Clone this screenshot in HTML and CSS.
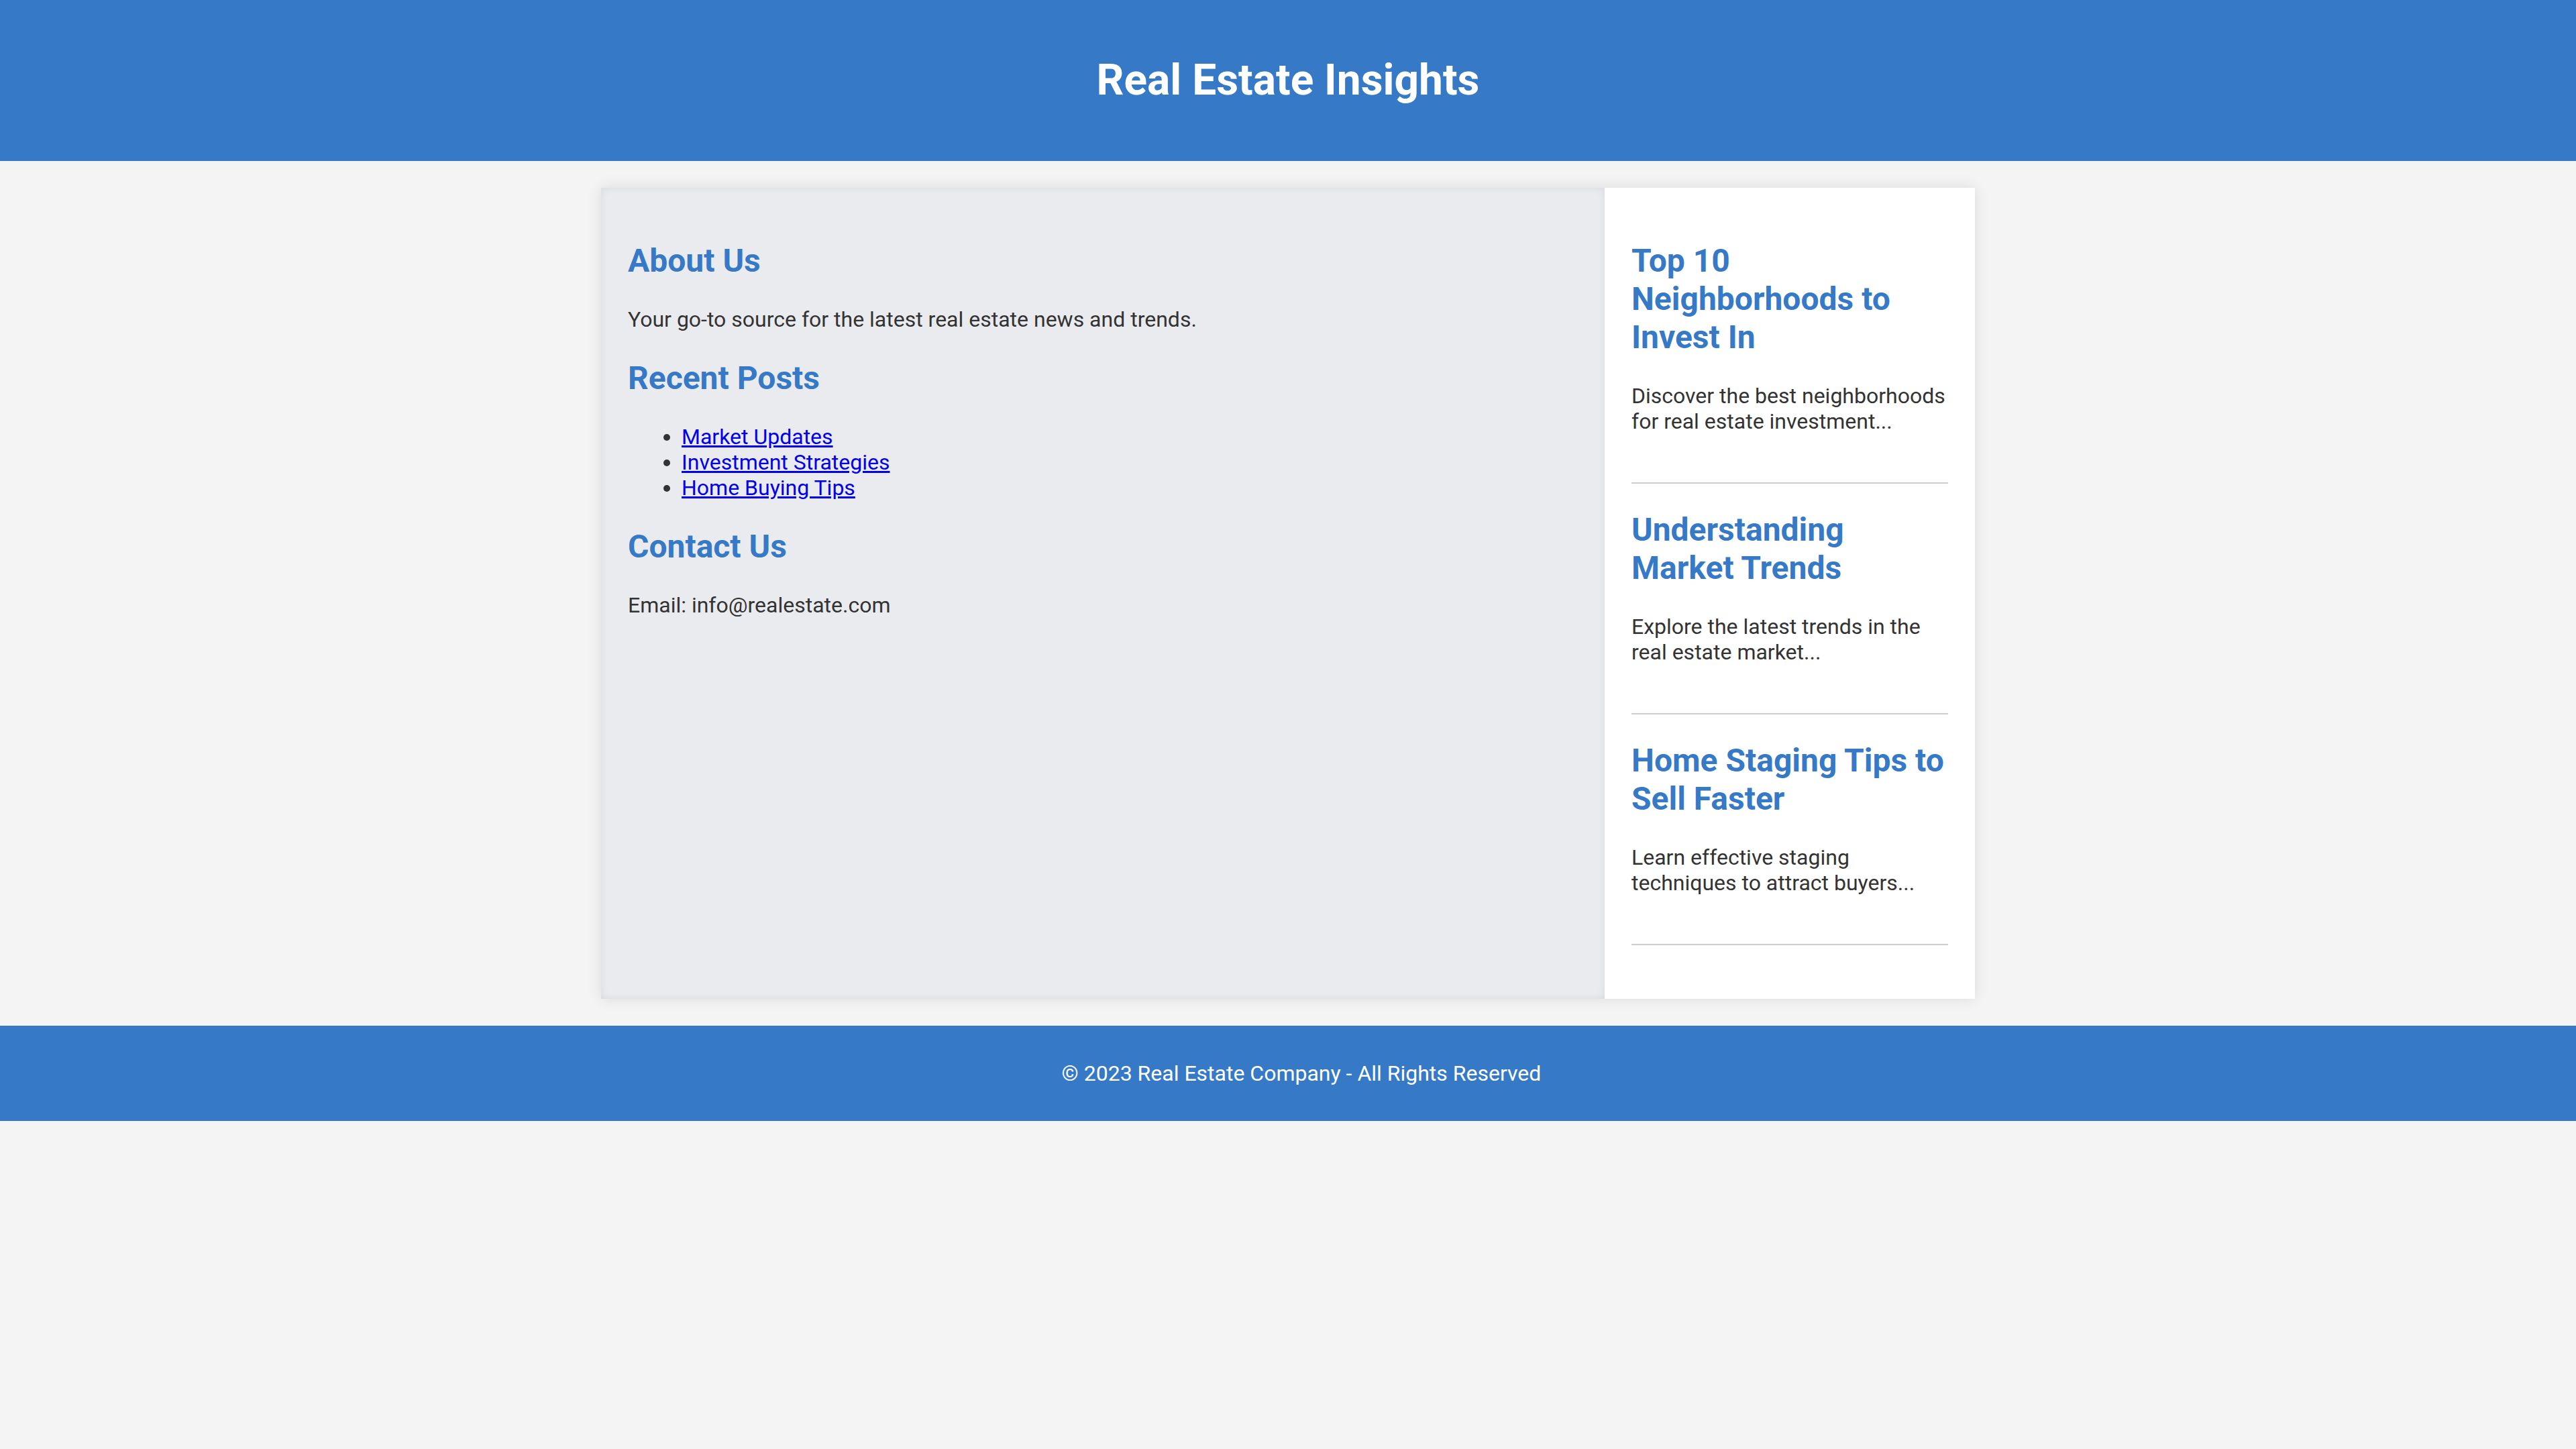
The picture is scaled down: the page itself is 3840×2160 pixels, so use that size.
FILE: index.html
```html
<!DOCTYPE html>
<html lang="en">
<head>
<meta charset="utf-8">
<title>Real Estate Insights</title>
<link rel="stylesheet" href="styles.css">
</head>
<body>
<header class="site-header">
  <h1 class="site-title">Real Estate Insights</h1>
</header>
<div class="container">
  <main class="main">
    <h2 class="section-title">About Us</h2>
    <p class="text">Your go-to source for the latest real estate news and trends.</p>
    <h2 class="section-title">Recent Posts</h2>
    <ul class="post-list">
      <li><a href="#">Market Updates</a></li>
      <li><a href="#">Investment Strategies</a></li>
      <li><a href="#">Home Buying Tips</a></li>
    </ul>
    <h2 class="section-title">Contact Us</h2>
    <p class="text">Email: info@realestate.com</p>
  </main>
  <aside class="sidebar">
    <article class="post">
      <h2 class="section-title">Top 10 Neighborhoods to Invest In</h2>
      <p class="text">Discover the best neighborhoods for real estate investment...</p>
    </article>
    <article class="post">
      <h2 class="section-title">Understanding Market Trends</h2>
      <p class="text">Explore the latest trends in the real estate market...</p>
    </article>
    <article class="post">
      <h2 class="section-title">Home Staging Tips to Sell Faster</h2>
      <p class="text">Learn effective staging techniques to attract buyers...</p>
    </article>
  </aside>
</div>
<footer class="site-footer">
  <p class="footer-text">&copy; 2023 Real Estate Company - All Rights Reserved</p>
</footer>
</body>
</html>
```
FILE: styles.css
```css
html, body {
  margin: 0;
  padding: 0;
}
body {
  background: #f4f4f4;
  font-family: Roboto, "Liberation Sans", Arial, sans-serif;
  font-size: 32px;
  color: #333333;
}
.site-header {
  background: #3679c6;
  color: #ffffff;
  text-align: center;
  padding: 82px 0 83px;
}
.site-title {
  margin: 0;
  font-size: 64px;
  font-weight: 700;
  line-height: normal;
}
.container {
  width: 2048px;
  margin: 40px auto;
  display: flex;
  background: #ffffff;
  box-shadow: 0 0 20px rgba(0, 0, 0, 0.1);
}
.main {
  flex: 3 1 0;
  padding: 40px;
  background: #eaebef;
  box-shadow: inset 0 0 12px rgba(0, 0, 0, 0.08);
}
.sidebar {
  flex: 1 1 0;
  padding: 40px;
  background: #ffffff;
}
.section-title {
  color: #3679c6;
  font-size: 48px;
  font-weight: 700;
  line-height: normal;
  margin: 40px 0;
}
.text {
  margin: 32px 0;
  line-height: normal;
}
.post-list {
  margin: 32px 0;
  padding-left: 80px;
  line-height: normal;
}
.post-list a {
  color: #0000ee;
}
.post {
  padding-bottom: 40px;
  border-bottom: 2px solid #cccccc;
  margin-bottom: 40px;
}
.site-footer {
  background: #3679c6;
  color: #ffffff;
  text-align: center;
  padding: 20px 0 20px 40px;
}
.footer-text {
  margin: 32px 0;
  line-height: normal;
}
```
